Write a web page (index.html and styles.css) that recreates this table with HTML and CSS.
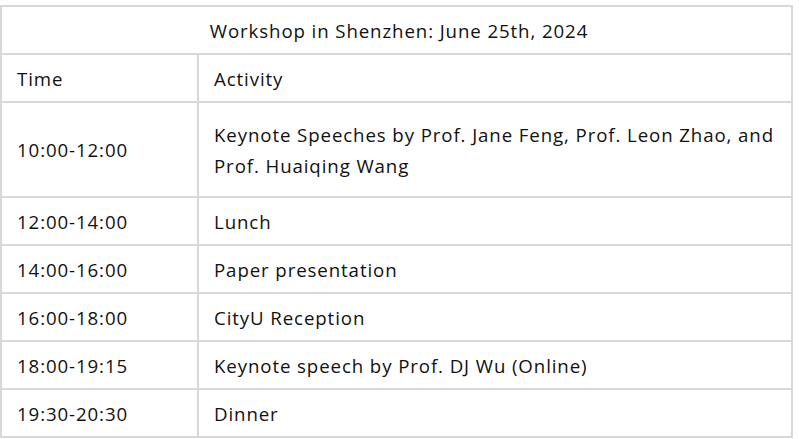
FILE: index.html
```html
<!DOCTYPE html>
<html>
<head>
<meta charset="utf-8">
<link rel="stylesheet" href="styles.css">
</head>
<body>
<table class="schedule">
  <colgroup><col class="c-time"><col class="c-act"></colgroup>
  <tr class="row"><td class="title" colspan="2">Workshop in Shenzhen: June 25th, 2024</td></tr>
  <tr class="row"><td class="time">Time</td><td class="act">Activity</td></tr>
  <tr class="row tall"><td class="time">10:00-12:00</td><td class="act">Keynote Speeches by Prof. Jane Feng, Prof. Leon Zhao, and Prof. Huaiqing Wang</td></tr>
  <tr class="row"><td class="time">12:00-14:00</td><td class="act">Lunch</td></tr>
  <tr class="row"><td class="time">14:00-16:00</td><td class="act">Paper presentation</td></tr>
  <tr class="row"><td class="time">16:00-18:00</td><td class="act">CityU Reception</td></tr>
  <tr class="row"><td class="time">18:00-19:15</td><td class="act">Keynote speech by Prof. DJ Wu (Online)</td></tr>
  <tr class="row"><td class="time">19:30-20:30</td><td class="act">Dinner</td></tr>
</table>
</body>
</html>
```
FILE: styles.css
```css
html, body {
  margin: 0;
  padding: 0;
  background: #ffffff;
}
body {
  padding-top: 5px;
  font-family: "Open Sans", "Noto Sans", sans-serif;
  font-size: 18.67px;
  font-weight: 500;
  letter-spacing: 0.9px;
  color: #111111;
}
.schedule {
  border-collapse: collapse;
  width: 793px;
  table-layout: fixed;
}
.c-time {
  width: 197px;
}
.schedule td {
  border: 2px solid #d8d8d8;
  height: 46px;
  padding: 0 10px 0 15px;
  vertical-align: middle;
  line-height: 31px;
}
.row.tall td {
  height: 93px;
}
.title {
  text-align: center;
}
```
